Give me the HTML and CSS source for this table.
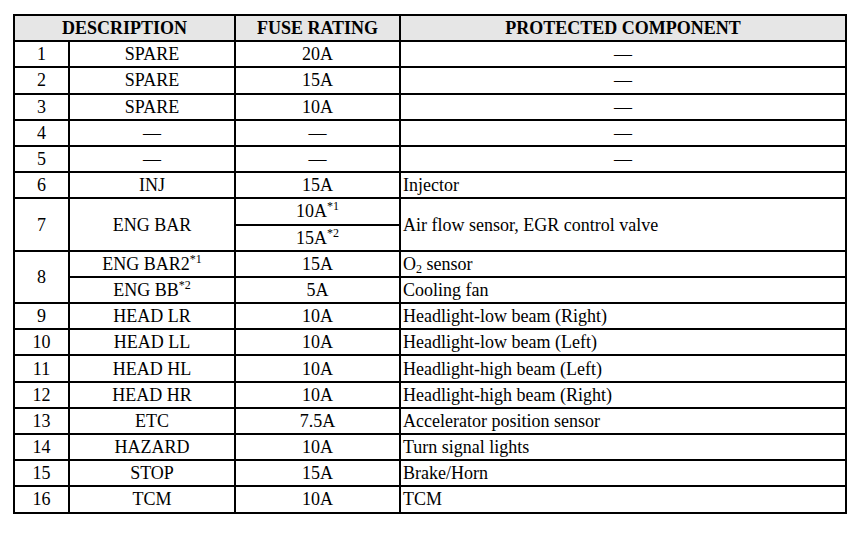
FILE: index.html
```html
<!DOCTYPE html>
<html>
<head>
<meta charset="utf-8">
<link rel="stylesheet" href="styles.css">
</head>
<body>
<table class="fuse">
  <colgroup>
    <col class="c-num">
    <col class="c-desc">
    <col class="c-fuse">
    <col class="c-prot">
  </colgroup>
  <thead>
    <tr><th colspan="2">DESCRIPTION</th><th>FUSE RATING</th><th>PROTECTED COMPONENT</th></tr>
  </thead>
  <tbody>
    <tr><td>1</td><td>SPARE</td><td>20A</td><td class="mid">—</td></tr>
    <tr><td>2</td><td>SPARE</td><td>15A</td><td class="mid">—</td></tr>
    <tr><td>3</td><td>SPARE</td><td>10A</td><td class="mid">—</td></tr>
    <tr><td>4</td><td>—</td><td>—</td><td class="mid">—</td></tr>
    <tr><td>5</td><td>—</td><td>—</td><td class="mid">—</td></tr>
    <tr><td>6</td><td>INJ</td><td>15A</td><td class="left">Injector</td></tr>
    <tr><td rowspan="2">7</td><td rowspan="2">ENG BAR</td><td>10A<sup>*1</sup></td><td rowspan="2" class="left">Air flow sensor, EGR control valve</td></tr>
    <tr><td>15A<sup>*2</sup></td></tr>
    <tr><td rowspan="2">8</td><td>ENG BAR2<sup>*1</sup></td><td>15A</td><td class="left">O<sub>2</sub> sensor</td></tr>
    <tr><td>ENG BB<sup>*2</sup></td><td>5A</td><td class="left">Cooling fan</td></tr>
    <tr><td>9</td><td>HEAD LR</td><td>10A</td><td class="left">Headlight-low beam (Right)</td></tr>
    <tr><td>10</td><td>HEAD LL</td><td>10A</td><td class="left">Headlight-low beam (Left)</td></tr>
    <tr><td>11</td><td>HEAD HL</td><td>10A</td><td class="left">Headlight-high beam (Left)</td></tr>
    <tr><td>12</td><td>HEAD HR</td><td>10A</td><td class="left">Headlight-high beam (Right)</td></tr>
    <tr><td>13</td><td>ETC</td><td>7.5A</td><td class="left">Accelerator position sensor</td></tr>
    <tr><td>14</td><td>HAZARD</td><td>10A</td><td class="left">Turn signal lights</td></tr>
    <tr><td>15</td><td>STOP</td><td>15A</td><td class="left">Brake/Horn</td></tr>
    <tr><td>16</td><td>TCM</td><td>10A</td><td class="left">TCM</td></tr>
  </tbody>
</table>
</body>
</html>
```
FILE: styles.css
```css
html, body {
  margin: 0;
  padding: 0;
  background: #ffffff;
}
body {
  padding: 14px 0 0 13px;
  font-family: "Liberation Serif", "Times New Roman", serif;
  color: #000;
}
.fuse {
  border-collapse: collapse;
  table-layout: fixed;
  width: 832px;
}
.c-num { width: 55px; }
.c-desc { width: 166px; }
.c-fuse { width: 165px; }
.c-prot { width: 446px; }
.fuse th, .fuse td {
  border: 2px solid #000;
  padding: 0 2px;
  height: 24.2px;
  line-height: 20px;
  text-align: center;
  vertical-align: middle;
  white-space: nowrap;
}
.fuse th {
  background: #e6e6e6;
  font-size: 18px;
  font-weight: bold;
}
.fuse td {
  font-size: 18px;
}
.fuse td.left {
  text-align: left;
  padding-left: 2px;
}
.fuse sup {
  font-size: 12px;
  line-height: 0;
  vertical-align: 7px;
}
.fuse sub {
  font-size: 12px;
  line-height: 0;
  vertical-align: -3px;
}
```
